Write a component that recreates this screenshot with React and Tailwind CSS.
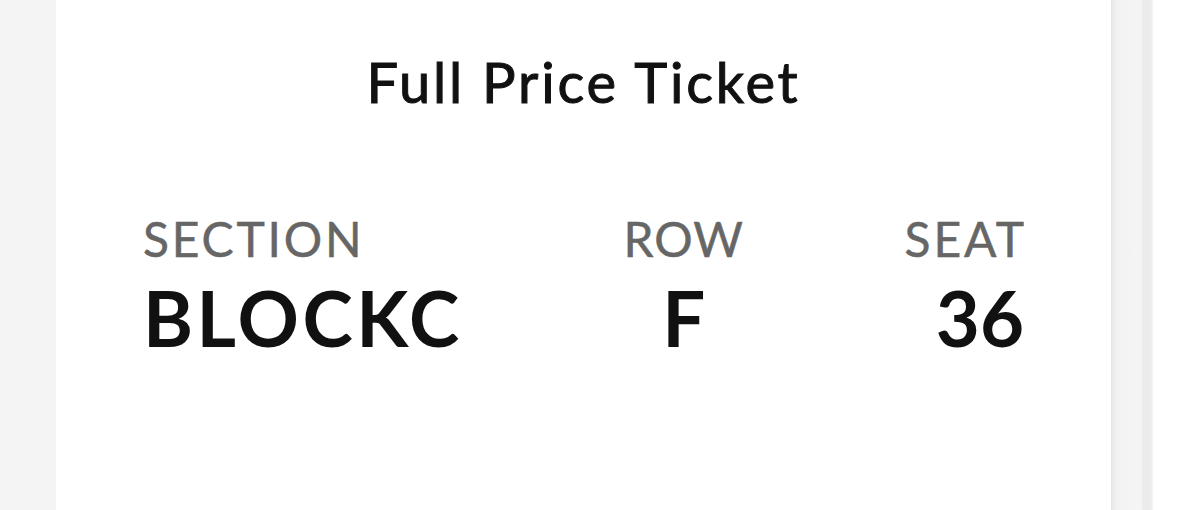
export default function App() {
  return (
    <div className="flex h-[510px] w-[1200px] overflow-hidden bg-white" style={{ fontFamily: "Lato, 'Noto Sans', sans-serif" }}>
      <div className="h-full w-[56px] bg-[#f4f4f4]" />
      <div className="flex h-full w-[1055px] flex-col bg-white px-[87px]">
        <div className="mt-[48px] text-center text-[56px] leading-[68px] tracking-[2.8px] text-[#111] [-webkit-text-stroke:1px_#111]">Full Price Ticket</div>
        <div className="mt-[95px] flex justify-between">
          <div className="flex flex-col items-start">
            <div className="text-[48px] leading-[56px] tracking-[2.8px] text-[#666] [-webkit-text-stroke:0.5px_#666]">SECTION</div>
            <div className="mt-[11px] text-[76px] font-bold leading-[80px] tracking-[3.5px] text-[#111]">BLOCKC</div>
          </div>
          <div className="flex flex-col items-center">
            <div className="text-[48px] leading-[56px] tracking-[1px] text-[#666] [-webkit-text-stroke:0.5px_#666]">ROW</div>
            <div className="mt-[11px] text-[76px] font-bold leading-[80px] text-[#111]">F</div>
          </div>
          <div className="flex flex-col items-end">
            <div className="-mr-[3px] text-[48px] leading-[56px] tracking-[2.8px] text-[#666] [-webkit-text-stroke:0.5px_#666]">SEAT</div>
            <div className="mt-[11px] text-[76px] font-bold leading-[80px] text-[#111]">36</div>
          </div>
        </div>
      </div>
      <div className="h-full w-[42px] bg-[linear-gradient(to_right,#e6e6e6,#f2f2f2_15%,#f5f5f5_70%,#ebebeb_78%,#ececec_95%,#f6f6f6)]" />
      <div className="h-full flex-1 bg-white" />
    </div>
  );
}
